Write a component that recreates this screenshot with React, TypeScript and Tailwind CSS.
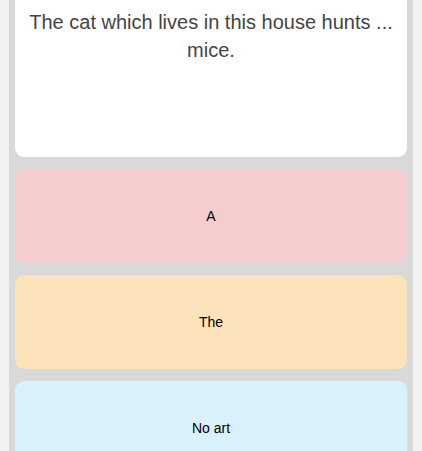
export default function App() {
  return (
    <div className="w-[422px] h-[451px] overflow-hidden bg-[#f2f2f2] px-[9px]" style={{ fontFamily: '"Liberation Sans", Arial, sans-serif' }}>
      <div className="h-full bg-[#d9d9d9] px-[6px] flex flex-col gap-[12px]">
        <div className="shrink-0 h-[157px] bg-white rounded-b-[9px] pt-[8px] px-[4px] text-center text-[20px] leading-[28px] text-[#444444]">
          The cat which lives in this house hunts ... mice.
        </div>
        <div className="shrink-0 h-[94px] bg-[#f6cdce] rounded-[9px] flex items-center justify-center text-[14px] text-black">A</div>
        <div className="shrink-0 h-[94px] bg-[#fce3bb] rounded-[9px] flex items-center justify-center text-[14px] text-black">The</div>
        <div className="shrink-0 h-[94px] bg-[#d9f1fa] rounded-[9px] flex items-center justify-center text-[14px] text-black">No art</div>
      </div>
    </div>
  );
}
